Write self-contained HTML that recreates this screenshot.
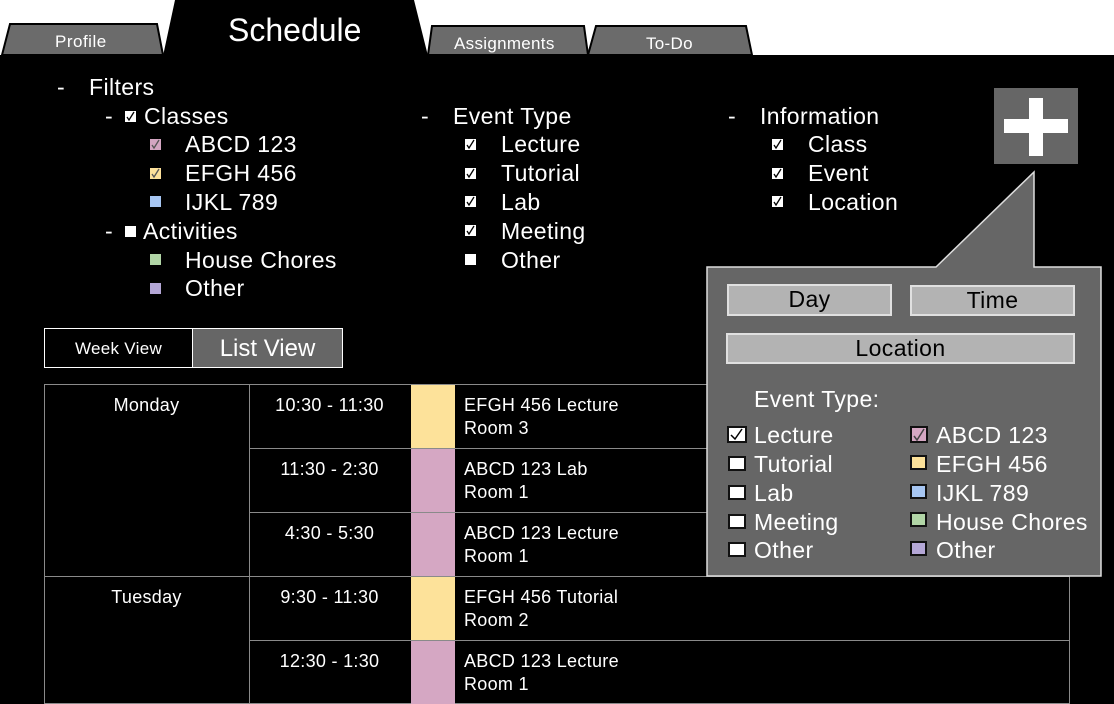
<!DOCTYPE html>
<html><head><meta charset="utf-8"><style>
*{margin:0;padding:0;box-sizing:border-box}
body{width:1114px;height:704px;background:#000;position:relative;overflow:hidden;font-family:"Liberation Sans",Arial,sans-serif;color:#fff}
.a{position:absolute;white-space:nowrap}
.t{font-size:23px;line-height:26px;letter-spacing:0.4px}
.cb{position:absolute;width:11px;height:11px}
.cbx{position:absolute;width:18px;height:15px;border:2px solid #111}
.s{font-size:18px;letter-spacing:0.3px}
.ln{position:absolute;background:#8a8a8a}
.btn{position:absolute;background:#b3b3b3;border:2px solid #e0e0e0;color:#000;font-size:23px;text-align:center;line-height:26px;letter-spacing:0.4px}
</style></head><body>
<div class="a" style="left:0;top:0;width:1114px;height:55px;background:#fff"></div>
<svg class="a" style="left:0;top:0" width="1114" height="56">
<polygon points="2,55 10,24 157,24 163,55" fill="#6b6b6b" stroke="#000" stroke-width="2"/>
<polygon points="163,56 175,0 414,0 428,56" fill="#000"/>
<polygon points="428,55 432,26 584,26 588,55" fill="#6b6b6b" stroke="#000" stroke-width="2"/>
<polygon points="588,55 596,26 746,26 752,55" fill="#6b6b6b" stroke="#000" stroke-width="2"/>
</svg>
<div class="a" style="left:55px;top:32px;font-size:17px;letter-spacing:0.5px">Profile</div>
<div class="a" style="left:228px;top:12px;font-size:32px">Schedule</div>
<div class="a" style="left:454px;top:34px;font-size:17px;letter-spacing:0.3px">Assignments</div>
<div class="a" style="left:646px;top:34px;font-size:17px;letter-spacing:0.3px">To-Do</div>

<div class="a t" style="left:57px;top:74px">-</div>
<div class="a t" style="left:89px;top:74px">Filters</div>
<div class="a t" style="left:105px;top:103px">-</div>
<svg class="cb" style="left:125px;top:111px" viewBox="0 0 11 11"><rect width="11" height="11" fill="#fff"/><path d="M2 6l2 3 5-8" stroke="#000" stroke-width="1.3" fill="none"/></svg>
<div class="a t" style="left:144px;top:103px">Classes</div>
<svg class="cb" style="left:150px;top:139px" viewBox="0 0 11 11"><rect width="11" height="11" fill="#d4a6c2"/><path d="M2 6l2 3 5-8" stroke="#555" stroke-width="1.3" fill="none"/></svg>
<div class="a t" style="left:185px;top:131px">ABCD 123</div>
<svg class="cb" style="left:150px;top:168px" viewBox="0 0 11 11"><rect width="11" height="11" fill="#fce09a"/><path d="M2 6l2 3 5-8" stroke="#555" stroke-width="1.3" fill="none"/></svg>
<div class="a t" style="left:185px;top:160px">EFGH 456</div>
<div class="cb" style="left:150px;top:196px;background:#a7c6f2"></div>
<div class="a t" style="left:185px;top:189px">IJKL 789</div>
<div class="a t" style="left:105px;top:218px">-</div>
<div class="cb" style="left:125px;top:226px;background:#fff"></div>
<div class="a t" style="left:143px;top:218px">Activities</div>
<div class="cb" style="left:150px;top:254px;background:#b1d5a6"></div>
<div class="a t" style="left:185px;top:247px">House Chores</div>
<div class="cb" style="left:150px;top:283px;background:#b4a7d6"></div>
<div class="a t" style="left:185px;top:275px">Other</div>

<div class="a t" style="left:421px;top:103px">-</div>
<div class="a t" style="left:453px;top:103px">Event Type</div>
<svg class="cb" style="left:465px;top:139px" viewBox="0 0 11 11"><rect width="11" height="11" fill="#fff"/><path d="M2 6l2 3 5-8" stroke="#000" stroke-width="1.3" fill="none"/></svg>
<div class="a t" style="left:501px;top:131px">Lecture</div>
<svg class="cb" style="left:465px;top:168px" viewBox="0 0 11 11"><rect width="11" height="11" fill="#fff"/><path d="M2 6l2 3 5-8" stroke="#000" stroke-width="1.3" fill="none"/></svg>
<div class="a t" style="left:501px;top:160px">Tutorial</div>
<svg class="cb" style="left:465px;top:196px" viewBox="0 0 11 11"><rect width="11" height="11" fill="#fff"/><path d="M2 6l2 3 5-8" stroke="#000" stroke-width="1.3" fill="none"/></svg>
<div class="a t" style="left:501px;top:189px">Lab</div>
<svg class="cb" style="left:465px;top:225px" viewBox="0 0 11 11"><rect width="11" height="11" fill="#fff"/><path d="M2 6l2 3 5-8" stroke="#000" stroke-width="1.3" fill="none"/></svg>
<div class="a t" style="left:501px;top:218px">Meeting</div>
<div class="cb" style="left:465px;top:254px;background:#fff"></div>
<div class="a t" style="left:501px;top:247px">Other</div>

<div class="a t" style="left:728px;top:103px">-</div>
<div class="a t" style="left:760px;top:103px">Information</div>
<svg class="cb" style="left:772px;top:139px" viewBox="0 0 11 11"><rect width="11" height="11" fill="#fff"/><path d="M2 6l2 3 5-8" stroke="#000" stroke-width="1.3" fill="none"/></svg>
<div class="a t" style="left:808px;top:131px">Class</div>
<svg class="cb" style="left:772px;top:168px" viewBox="0 0 11 11"><rect width="11" height="11" fill="#fff"/><path d="M2 6l2 3 5-8" stroke="#000" stroke-width="1.3" fill="none"/></svg>
<div class="a t" style="left:808px;top:160px">Event</div>
<svg class="cb" style="left:772px;top:196px" viewBox="0 0 11 11"><rect width="11" height="11" fill="#fff"/><path d="M2 6l2 3 5-8" stroke="#000" stroke-width="1.3" fill="none"/></svg>
<div class="a t" style="left:808px;top:189px">Location</div>

<div class="a" style="left:994px;top:88px;width:84px;height:76px;background:#666"></div>
<div class="a" style="left:1004px;top:119px;width:64px;height:14px;background:#fff"></div>
<div class="a" style="left:1029px;top:98px;width:14px;height:58px;background:#fff"></div>

<div class="a" style="left:44px;top:328px;width:149px;height:40px;border:1px solid #fff;font-size:17px;text-align:center;line-height:40px;letter-spacing:0.3px">Week View</div>
<div class="a" style="left:192px;top:328px;width:151px;height:40px;border:1px solid #fff;background:#666;font-size:24px;text-align:center;line-height:40px">List View</div>

<div class="ln" style="left:44px;top:384px;width:1026px;height:1px"></div>
<div class="ln" style="left:249px;top:448px;width:821px;height:1px"></div>
<div class="ln" style="left:249px;top:512px;width:821px;height:1px"></div>
<div class="ln" style="left:44px;top:576px;width:1026px;height:1px"></div>
<div class="ln" style="left:249px;top:640px;width:821px;height:1px"></div>
<div class="ln" style="left:44px;top:384px;width:1px;height:320px"></div>
<div class="ln" style="left:249px;top:384px;width:1px;height:320px"></div>
<div class="ln" style="left:1069px;top:384px;width:1px;height:320px"></div>
<div class="ln" style="left:44px;top:703px;width:1026px;height:1px"></div>
<div class="a" style="left:411px;top:385px;width:44px;height:63px;background:#fde29a"></div>
<div class="a" style="left:411px;top:449px;width:44px;height:63px;background:#d5a7c3"></div>
<div class="a" style="left:411px;top:513px;width:44px;height:63px;background:#d5a7c3"></div>
<div class="a" style="left:411px;top:577px;width:44px;height:63px;background:#fde29a"></div>
<div class="a" style="left:411px;top:641px;width:44px;height:63px;background:#d5a7c3"></div>
<div class="a s" style="left:44px;top:395px;width:205px;text-align:center">Monday</div>
<div class="a s" style="left:44px;top:587px;width:205px;text-align:center">Tuesday</div>
<div class="a s" style="left:249px;top:395px;width:161px;text-align:center">10:30 - 11:30</div>
<div class="a s" style="left:249px;top:459px;width:161px;text-align:center">11:30 - 2:30</div>
<div class="a s" style="left:249px;top:523px;width:161px;text-align:center">4:30 - 5:30</div>
<div class="a s" style="left:249px;top:587px;width:161px;text-align:center">9:30 - 11:30</div>
<div class="a s" style="left:249px;top:651px;width:161px;text-align:center">12:30 - 1:30</div>
<div class="a s" style="left:464px;top:394px;line-height:23px">EFGH 456 Lecture<br>Room 3</div>
<div class="a s" style="left:464px;top:458px;line-height:23px">ABCD 123 Lab<br>Room 1</div>
<div class="a s" style="left:464px;top:522px;line-height:23px">ABCD 123 Lecture<br>Room 1</div>
<div class="a s" style="left:464px;top:586px;line-height:23px">EFGH 456 Tutorial<br>Room 2</div>
<div class="a s" style="left:464px;top:650px;line-height:23px">ABCD 123 Lecture<br>Room 1</div>

<svg class="a" style="left:700px;top:165px" width="414" height="420">
<path d="M7 102 L236 102 L334 7 L334 102 L401 102 L401 411 L7 411 Z" fill="#666" stroke="#ddd" stroke-width="1.5"/>
</svg>
<div class="btn" style="left:727px;top:284px;width:165px;height:32px">Day</div>
<div class="btn" style="left:910px;top:285px;width:165px;height:31px">Time</div>
<div class="btn" style="left:726px;top:333px;width:349px;height:31px">Location</div>
<div class="a t" style="left:754px;top:386px">Event Type:</div>
<svg class="a" style="left:727px;top:426px" width="20" height="17" viewBox="0 0 20 17"><rect x="1" y="1" width="18" height="15" fill="#fff" stroke="#111" stroke-width="2"/><path d="M4 9l4 4 7-10" stroke="#000" stroke-width="1.5" fill="none"/></svg>
<div class="a t" style="left:754px;top:422px">Lecture</div>
<div class="cbx" style="left:728px;top:456px;background:#fff"></div>
<div class="a t" style="left:754px;top:451px">Tutorial</div>
<div class="cbx" style="left:728px;top:485px;background:#fff"></div>
<div class="a t" style="left:754px;top:480px">Lab</div>
<div class="cbx" style="left:728px;top:514px;background:#fff"></div>
<div class="a t" style="left:754px;top:509px">Meeting</div>
<div class="cbx" style="left:728px;top:542px;background:#fff"></div>
<div class="a t" style="left:754px;top:537px">Other</div>
<svg class="a" style="left:910px;top:426px" width="18" height="17" viewBox="0 0 18 17"><rect x="1" y="1" width="16" height="15" fill="#d5a7c3" stroke="#111" stroke-width="2"/><path d="M4 10l3 4 7-11" stroke="#444" stroke-width="1.5" fill="none"/></svg>
<div class="a t" style="left:936px;top:422px">ABCD 123</div>
<div class="cbx" style="left:910px;top:455px;width:17px;background:#fde29a"></div>
<div class="a t" style="left:936px;top:451px">EFGH 456</div>
<div class="cbx" style="left:910px;top:484px;width:17px;background:#a7c6f2"></div>
<div class="a t" style="left:936px;top:480px">IJKL 789</div>
<div class="cbx" style="left:910px;top:512px;width:17px;background:#b1d5a6"></div>
<div class="a t" style="left:936px;top:509px">House Chores</div>
<div class="cbx" style="left:910px;top:541px;width:17px;background:#b4a7d6"></div>
<div class="a t" style="left:936px;top:537px">Other</div>
</body></html>
